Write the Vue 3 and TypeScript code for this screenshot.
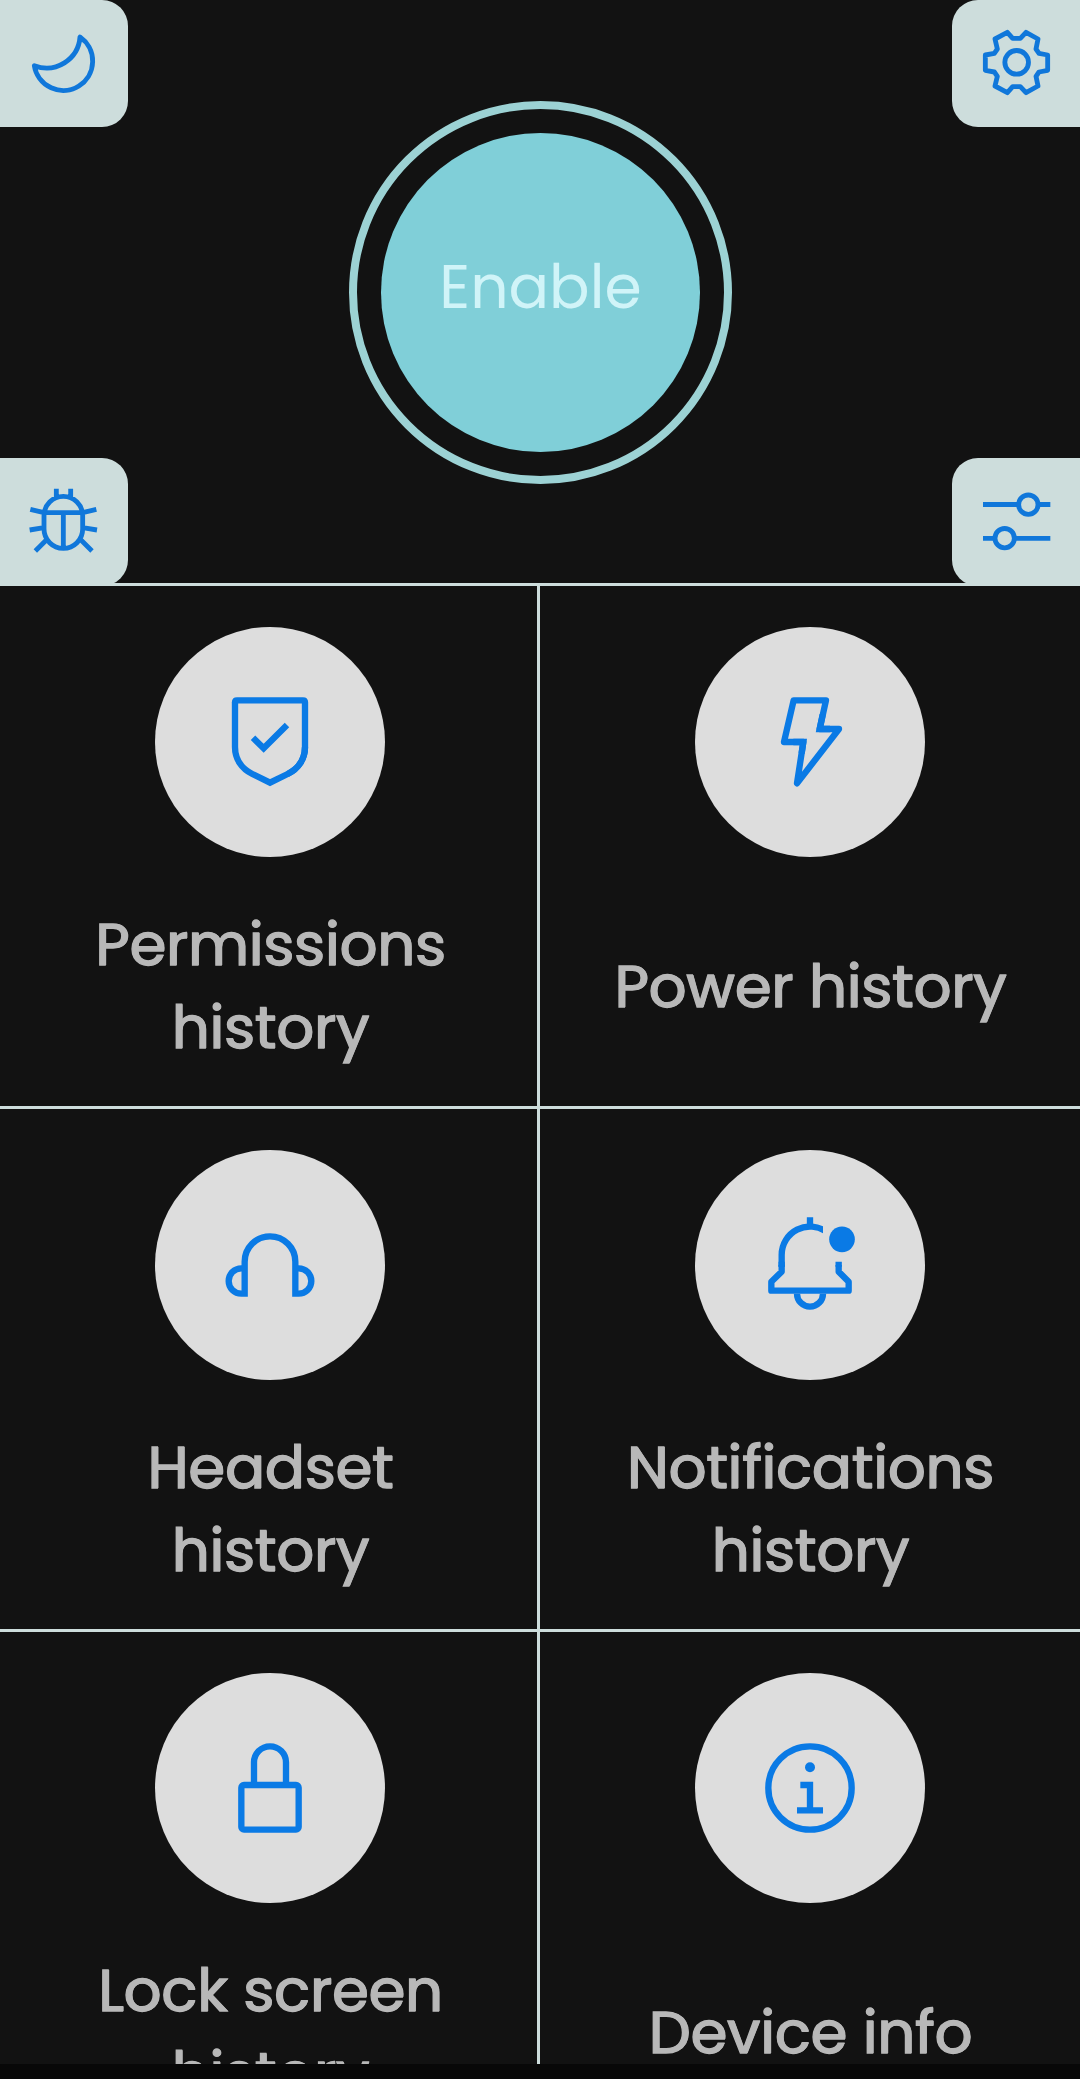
<script setup lang="ts">
interface Tile {
  icon: 'shield' | 'bolt' | 'headset' | 'bell' | 'lock' | 'info'
  lines: string[]
}

const tiles: Tile[] = [
  { icon: 'shield', lines: ['Permissions', 'history'] },
  { icon: 'bolt', lines: ['Power history'] },
  { icon: 'headset', lines: ['Headset', 'history'] },
  { icon: 'bell', lines: ['Notifications', 'history'] },
  { icon: 'lock', lines: ['Lock screen', 'history'] },
  { icon: 'info', lines: ['Device info'] },
]
</script>

<template>
  <div class="screen">
    <header class="hero">
      <div class="side">
        <button class="corner left top" aria-label="Dark mode">
          <svg viewBox="0 0 384 384">
            <path class="round" d="M103 197A88 88 0 1 0 240 111A100.5 100.5 0 0 1 103 197Z" />
          </svg>
        </button>
        <button class="corner left bottom" aria-label="Debug">
          <svg viewBox="0 24 384 384">
            <path d="M132 197a58 58 0 0 1 116 0v40a58 58 0 0 1-116 0zM132 188H248M190 188V295M169 116V144M212 116V144M91 178L132 188M289 178L248 188M89 240L132 233M291 240L248 233M106 303L142 267M276 303L240 267" />
          </svg>
        </button>
      </div>
      <button class="ring">
        <span class="disc"><span class="enable">Enable</span></span>
      </button>
      <div class="side end">
        <button class="corner right top" aria-label="Settings">
          <svg viewBox="36 0 384 384">
            <path class="round" d="M218 115H241L258 97L294 117L288 147L297 160L323 165V211L297 216L288 229L294 258L258 278L241 260H218L202 278L165 258L172 229L163 216L136 211V165L163 160L172 147L165 117L202 97Z" />
            <circle cx="230" cy="187" r="35.5" />
          </svg>
        </button>
        <button class="corner right bottom" aria-label="Filters">
          <svg viewBox="36 24 384 384">
            <path d="M129 163.500H236M294 163.500H331M129 265H165M223 265H331" />
            <circle cx="265" cy="164" r="29" />
            <circle cx="194" cy="264.500" r="29" />
          </svg>
        </button>
      </div>
    </header>

    <main class="grid">
      <section v-for="tile in tiles" :key="tile.icon" class="tile">
        <div class="badge">
          <svg v-if="tile.icon === 'shield'" viewBox="15 21 690 690">
            <path class="round" d="M255 247q0-6 6-6H459q6 0 6 6V381c0 36-20 65-52 81" />
            <path d="M255 246V381c0 36 20 65 52 81L360 488L413 462c32-16 52-45 52-81" />
            <path d="M309 353L341 385L411 315" />
          </svg>
          <svg v-else-if="tile.icon === 'bolt'" viewBox="15 21 690 690">
            <path class="round" d="M311 241H408L389 327H447L321 490L340 366H282Z" />
            <path d="M398 284L389 327H420M310 366H340L335 400" />
          </svg>
          <svg v-else-if="tile.icon === 'headset'" viewBox="15 30 690 690">
            <path d="M284 470V365A76 76 0 0 1 436 365V470M284 461H274A38 38 0 0 1 274 385H284M436 461H446A38 38 0 0 0 446 385H436" />
          </svg>
          <svg v-else-if="tile.icon === 'bell'" viewBox="15 30 690 690">
            <clipPath id="dome-edge"><rect x="200" y="200" width="199" height="300" /></clipPath>
            <path clip-path="url(#dome-edge)" d="M410 276A85 85 0 0 0 275 345V380" />
            <path class="round" d="M275 375V395L244 425V452H476V425L446 395V375" />
            <path d="M275 365V380M446 365V380M360 232V260M321 461A39 39 0 0 0 399 461" />
            <circle class="solid" cx="456" cy="298" r="38.500" />
          </svg>
          <svg v-else-if="tile.icon === 'lock'" viewBox="15 24 690 690">
            <rect x="274" y="360" width="172" height="134" rx="8" />
            <path d="M312 360V292A48 48 0 0 1 408 292V360" />
          </svg>
          <svg v-else viewBox="15 24 690 690">
            <circle cx="360" cy="369" r="125" />
            <circle class="solid" cx="360" cy="307" r="15" />
            <path d="M331 360H360V436M321 436H399" />
          </svg>
        </div>
        <div class="label">
          <span v-for="line in tile.lines" :key="line" class="line">{{ line }}</span>
        </div>
      </section>
    </main>
    <footer class="nav"></footer>
  </div>
</template>

<style>
body {
  background: #121212;
}
</style>

<style scoped>
.screen {
  display: flex;
  flex-direction: column;
  width: 1080px;
  height: 2079px;
  overflow: hidden;
  background: #121212;
  font-family: Poppins, Inter, 'Open Sans', sans-serif;
}
button {
  display: block;
  margin: 0;
  padding: 0;
  border: 0;
  font: inherit;
}
.hero {
  display: flex;
  flex: none;
  justify-content: space-between;
  box-sizing: border-box;
  height: 586px;
  border-bottom: 3px solid #cddddc;
}
.side {
  display: flex;
  flex-direction: column;
  justify-content: space-between;
  width: 128px;
  height: 586px;
}
.corner {
  width: 128px;
  height: 127px;
  background: #cddddc;
}
.corner.bottom {
  height: 128px;
}
.corner.left {
  border-radius: 0 26px 26px 0;
}
.corner.right {
  border-radius: 26px 0 0 26px;
}
.corner svg {
  display: block;
  width: 128px;
  height: 128px;
  stroke: #1077da;
  stroke-width: 14.5;
}
svg {
  fill: none;
}
.round {
  stroke-linejoin: round;
}
.ring {
  display: flex;
  align-items: center;
  justify-content: center;
  box-sizing: border-box;
  width: 383px;
  height: 383px;
  margin: 101px 0 0 1px;
  border: 8px solid #9cd2d4;
  border-radius: 50%;
  background: none;
}
.disc {
  display: flex;
  align-items: center;
  justify-content: center;
  width: 319px;
  height: 319px;
  border-radius: 50%;
  background: #80cfd8;
}
.enable {
  color: #d0f4f8;
  font-size: 60px;
  line-height: 84px;
  padding-bottom: 12px;
}
.grid {
  display: grid;
  flex: none;
  grid-template-columns: 540px 540px;
  grid-auto-rows: 523px;
  height: 1478px;
  overflow: hidden;
}
.tile {
  display: flex;
  flex-direction: column;
  align-items: center;
  padding-top: 41px;
  box-sizing: border-box;
  height: 523px;
  box-shadow: inset 0 -3px #cddddc;
}
.tile:nth-child(odd) {
  box-shadow: inset 0 -3px #cddddc, inset -3px 0 #cddddc;
}
.badge {
  flex: none;
  width: 230px;
  height: 230px;
  border-radius: 50%;
  background: #ddd;
}
.badge svg {
  display: block;
  width: 230px;
  height: 230px;
  stroke: #0a7ae5;
  stroke-width: 19;
}
.badge .solid {
  fill: #0a7ae5;
  stroke: none;
}
.label {
  display: flex;
  flex-direction: column;
  align-items: center;
  justify-content: center;
  height: 168px;
  margin-top: 45px;
  padding-left: 1px;
  color: #b8b8b8;
  font-size: 59px;
  line-height: 83px;
  -webkit-text-stroke: 1.3px #b8b8b8;
  text-shadow: 1px 0 #b8b8b8;
}
.line {
  white-space: nowrap;
}
.nav {
  flex: none;
  height: 15px;
  background: #080808;
}
</style>
